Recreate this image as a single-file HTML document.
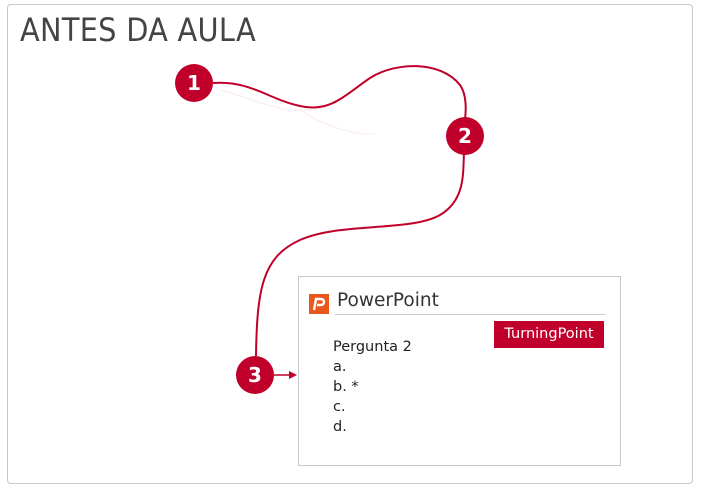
<!DOCTYPE html>
<html><head><style>
body{margin:0;width:702px;height:492px;background:#fff;font-family:"DejaVu Sans","Liberation Sans",sans-serif;position:relative;overflow:hidden}
.frame{position:absolute;left:7px;top:4px;width:686px;height:480px;border:1px solid #c8c8c8;border-radius:4px;box-sizing:border-box}
h1{position:absolute;left:20px;top:11px;margin:0;font-weight:normal;font-size:32px;color:#444;font-family:"DejaVu Sans Condensed","DejaVu Sans",sans-serif;letter-spacing:0.3px}
.c{position:absolute;width:38px;height:38px;border-radius:50%;background:#c0002b;color:#fff;font-weight:bold;font-size:20px;text-align:center;line-height:38px}
.box{position:absolute;left:298px;top:276px;width:323px;height:190px;border:1px solid #c8c8c8;box-sizing:border-box}
.t{position:absolute;font-size:14.5px;color:#222;left:333px}
</style></head><body>
<div class="frame"></div>
<h1>ANTES DA AULA</h1>
<svg width="702" height="492" style="position:absolute;left:0;top:0">
<path d="M220 90 C260 100 290 120 330 105 M300 110 C330 130 360 135 375 134" fill="none" stroke="#fbf0f2" stroke-width="1.5"/>
<path d="M213 83 C250 80 270 100 300 106 C330 113 345 95 370 78 C395 62 440 60 460 85 C467 95 466 110 465 120" fill="none" stroke="#c0002b" stroke-width="2"/>
<path d="M464 152 C463 175 465 200 440 215 C410 232 340 222 300 240 C262 257 257 290 256 356" fill="none" stroke="#c0002b" stroke-width="2"/>
<path d="M274 375 L290 375" stroke="#c0002b" stroke-width="1.5"/>
<path d="M297 375 L289 371 L289 379 Z" fill="#c0002b"/>
</svg>
<div class="c" style="left:175px;top:64px">1</div>
<div class="c" style="left:446px;top:117px">2</div>
<div class="c" style="left:236px;top:356px">3</div>
<div class="box"></div>
<svg width="20" height="20" style="position:absolute;left:309px;top:294px"><rect width="20" height="20" fill="#e8581c"/><path d="M5 16 L7 5 L12 5 C16 5 16 11 12 11 L8 11" fill="none" stroke="#fff" stroke-width="2.4"/></svg>
<div style="position:absolute;left:337px;top:290px;font-size:18.5px;color:#333">PowerPoint</div>
<div style="position:absolute;left:335px;top:314px;width:270px;height:1px;background:#ccc"></div>
<div style="position:absolute;left:494px;top:321px;width:110px;height:27px;background:#c0002b;color:#fff;font-size:14.5px;line-height:27px;text-align:center">TurningPoint</div>
<div class="t" style="top:339px">Pergunta 2</div>
<div class="t" style="top:359px">a.</div>
<div class="t" style="top:379px">b. *</div>
<div class="t" style="top:399px">c.</div>
<div class="t" style="top:419px">d.</div>
</body></html>
